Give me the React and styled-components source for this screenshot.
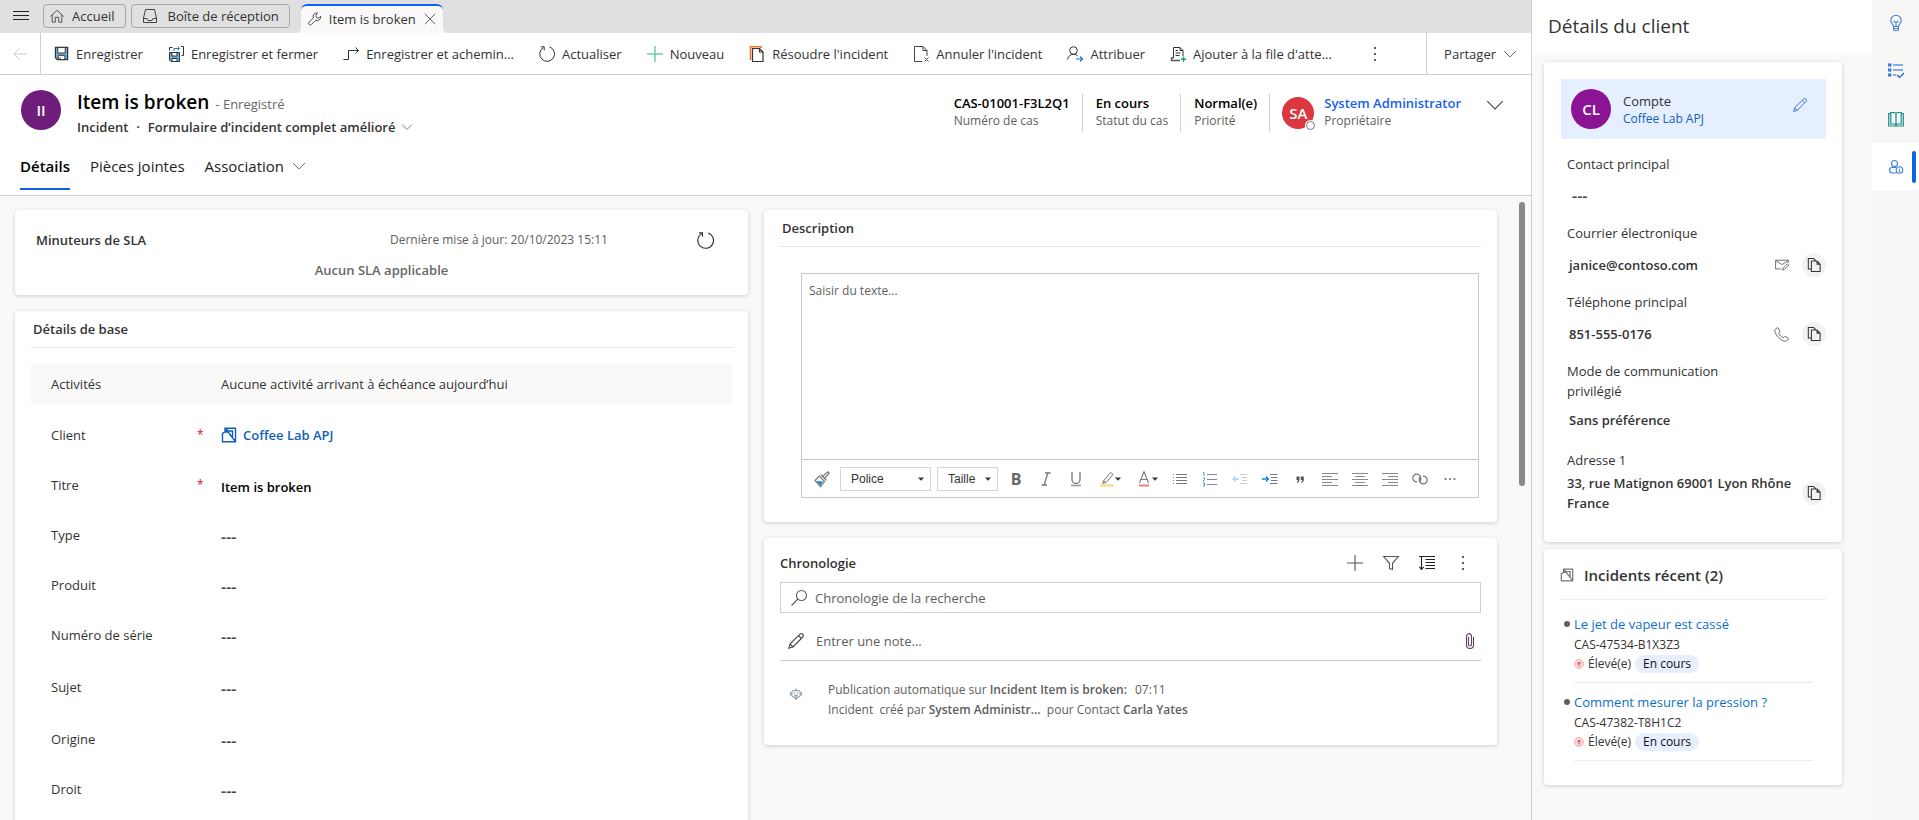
import React from "react";
import styled, { createGlobalStyle, css } from "styled-components";

const GlobalStyle = createGlobalStyle`
  *, *::before, *::after { box-sizing: border-box; }
  body { margin: 0; background: #faf9f8; }
  body, button, input, textarea, select {
    font-family: "Open Sans", "Noto Sans", sans-serif;
    font-size: 13px;
    line-height: 20px;
    color: #333;
  }
  button { background: none; border: 0; padding: 0; cursor: pointer; }
  a { text-decoration: none; }
  b { font-weight: 600; }
  h1, h2, p, ul, dl, dd { margin: 0; padding: 0; }
  ul { list-style: none; }
`;

/* ---------- Icons ---------- */

const Svg = styled.svg.attrs((p) => ({
  viewBox: p.viewBox || "0 0 16 16",
  fill: "none",
  stroke: p.stroke || "currentColor",
  "aria-hidden": true,
}))`
  width: ${(p) => p.$w || 16}px;
  height: ${(p) => p.$h || p.$w || 16}px;
  flex: none;
  display: block;
  overflow: visible;
`;

const MenuIcon = () => (
  <Svg stroke="#222" strokeWidth="1.200"><path d="M0 3.500h16M0 7.500h16M0 11.500h16" /></Svg>
);
const HomeIcon = () => (
  <Svg $w={14} stroke="#444"><path d="M.5 8.500 8 1.500l7.500 7M2.500 6.800v8.200h3.500v-5.500h4v5.500h3.500v-8.200" /></Svg>
);
const InboxIcon = () => (
  <Svg stroke="#444"><path d="M3.500 1.500h9l2 8.500v4.500h-13v-4.500zM1.500 10.500h3.500l1 2h4l1-2h3.500" /></Svg>
);
const WrenchIcon = () => (
  <Svg $w={14}><path d="M10.700 1.200a4 4 0 0 0-4.500 5.600L1.300 11.600a1.600 1.600 0 0 0 0 2.600 1.600 1.600 0 0 0 2.600 0l4.900-4.800a4 4 0 0 0 5.600-4.600l-2.300 2.300-2.400-.7-.7-2.400z" /></Svg>
);
const CloseIcon = () => (
  <Svg $w={12}><path d="M1 1 15 15M15 1 1 15" /></Svg>
);
const BackIcon = () => (
  <Svg stroke="#c8c6c4" $w={14}><path d="M16 8H1M7.500 1.500 1 8l6.500 6.500" /></Svg>
);
const SaveIcon = () => (
  <Svg $w={15}>
    <path d="M1.500 1.500h13v13h-11l-2-2z" fill="#69afe5" stroke="#333" strokeWidth="1.300" />
    <path d="M4 1.500h8v6H4z" fill="#fff" stroke="#333" />
    <path d="M4.500 10h7v4.500h-7z" fill="#fff" stroke="#333" />
    <path d="M6.500 12v2.500" stroke="#333" />
  </Svg>
);
const SaveCloseIcon = () => (
  <Svg>
    <path d="M1.500 6.500h10v9h-8.500l-1.500-1.500z" fill="#69afe5" stroke="#333" />
    <path d="M4 6.500h5v3.500H4zM4 12.500h5v3H4z" fill="#fff" stroke="#333" />
    <path d="M1.500 4.500v-3h3M13 .5h2.500v9h-2" stroke="#333" />
    <path d="M6 5V2.500h5M9.500.5l2 2-2 2" stroke="#1a75c4" />
  </Svg>
);
const RouteIcon = () => (
  <Svg stroke="#333"><path d="M.5 13.500h5V4.500h10M12.500 1.500l3 3-3 3" /></Svg>
);
const RefreshIcon = ({ w = 16 }) => (
  <Svg $w={w} stroke="#333"><path d="M10.500.9A7.400 7.400 0 1 1 4.500 1.500M1.800.8h3.400v3.600" /></Svg>
);
const PlusIcon = ({ color = "#6fcf9f", sw = 1.5, w = 16 }) => (
  <Svg $w={w} stroke={color} strokeWidth={sw}><path d="M8 0v16M0 8h16" /></Svg>
);
const ResolveIcon = () => (
  <Svg>
    <path d="M1.500 14V.7h10.500V2" stroke="#e8772e" strokeWidth="1.600" />
    <path d="M3.500 2.500h7l3.500 3.500v9.500H3.500zM10.500 2.500V6H14" fill="#fff" stroke="#333" strokeWidth="1.200" />
  </Svg>
);
const CancelIcon = () => (
  <Svg>
    <path d="M9 15.500H1.500V.5h8.500l4 4v5.500M10 .5v4h4" stroke="#444" />
    <path d="m11.500 11.500 4 4M15.500 11.500l-4 4" stroke="#555" />
  </Svg>
);
const AssignIcon = () => (
  <Svg>
    <circle cx="6.500" cy="4.500" r="3.800" stroke="#333" />
    <path d="M.6 13.500C1 10.300 3.300 8.400 6.500 8.400c1.700 0 3.200.6 4.300 1.700" stroke="#333" />
    <path d="M9 13h6.500M13 10.500l2.500 2.500-2.500 2.500" stroke="#1a75c4" strokeWidth="1.200" />
  </Svg>
);
const QueueIcon = () => (
  <Svg>
    <path d="M3.500 12V1.500h6.500l3 3V10M10 1.500v3h3M5.500 4.500h2.500M5.500 7h5M5.500 9.500h4" stroke="#333" />
    <path d="M3.500 12H1.500v2.500h8.500" stroke="#555" strokeWidth="1.400" />
    <path d="M13.500 10.500v5.500M10.800 13.200h5.400" stroke="#19a35b" strokeWidth="1.400" />
  </Svg>
);
const DotsVertical = () => (
  <Svg><g fill="currentColor" stroke="none"><circle cx="8" cy="2" r="1.100" /><circle cx="8" cy="8" r="1.100" /><circle cx="8" cy="14" r="1.100" /></g></Svg>
);
const Chevron = ({ w = 12, color = "#605e5c" }) => (
  <Svg $w={w} stroke={color} strokeWidth={w > 14 ? 1.1 : 1.3}><path d="M.3 4.200 8 11.900l7.700-7.700" /></Svg>
);
const AccountIcon = ({ color = "#1160b7", w = 16 }) => (
  <Svg $w={w} stroke={color} strokeWidth="1.400">
    <path d="M4 5 4 1.200h10.500V14.800H1.500V6.500L4 5h3l7.500 9.500M6.500 1.500 4.500 4.500M5 4h6.500v6" />
  </Svg>
);
const BrushIcon = () => (
  <Svg stroke="#777">
    <path d="M1 9.500 5.500 5l5 5.500-4 5z" fill="#fff" strokeWidth="1.200" />
    <path d="m2.500 10 6.500.5L6.500 14.500z" fill="#1a86d8" stroke="none" />
    <path d="m7 3.500 5.500 6M8.500 5.500 14 .8l1.200 1.300-4.700 5.400" fill="#fff" strokeWidth="1.200" />
  </Svg>
);
const PenMarkIcon = ({ color }) => (
  <Svg stroke="#777">
    <path d="M4.500 10 11.500 1.500l2.500 2-7 8-3.500 1zM4.500 10l2.500 1.500" />
    <path d="M1 14.500h14" stroke={color} strokeWidth="2" />
  </Svg>
);
const FontColorIcon = () => (
  <Svg stroke="#777">
    <path d="M3.500 12 8 .8 12.500 12M5 8.500h6" strokeWidth="1.100" />
    <path d="M3 14.500h10" stroke="#f0797a" strokeWidth="2" />
  </Svg>
);
const UnderlineIcon = () => (
  <Svg stroke="#777"><path d="M4 1v7.500a4 4 0 0 0 8 0V1" strokeWidth="1.300" /><path d="M3 14.500h10" strokeWidth="1.600" stroke="#999" /></Svg>
);
const ItalicIcon = () => (
  <Svg stroke="#777"><path d="M7 2h5.500M3.500 14h5.500M9.800 2 6.200 14" strokeWidth="1.300" /></Svg>
);
const BulletsIcon = () => (
  <Svg stroke="#777"><path d="M4 3.500h11M4 6.500h11M4 9.500h11M4 12.500h11" /><path d="M1 3.500h1M1 6.500h1M1 9.500h1M1 12.500h1" stroke="#3a96dd" /></Svg>
);
const NumbersIcon = () => (
  <Svg stroke="#8a8886"><path d="M5 3.500h10M5 8.500h10M5 13.500h10" /><path d="M1 2l1-.5V5M1 7h1.500v1.500L1 10h1.500M1 12h1.500v3H1" stroke="#3a96dd" /></Svg>
);
const OutdentIcon = () => (
  <Svg stroke="#ccc"><path d="M8 3.500h7M10 6.500h5M10 9.500h5M8 12.500h7" /><path d="M7 8H.8M3.500 5.500 1 8l2.500 2.500" stroke="#a9d3f2" strokeWidth="1.300" /></Svg>
);
const IndentIcon = () => (
  <Svg stroke="#777"><path d="M8 3.500h7.500M9 6.500h6.500M9 9.500h6.500M8 12.500h7.500" /><path d="M0 8h6.500M4 5.500 6.500 8 4 10.500" stroke="#1a86d8" strokeWidth="1.400" /></Svg>
);
const QuoteIcon = () => (
  <Svg><g fill="#555" stroke="none"><path d="M4.500 5.500h3v3c0 1.800-.8 3-2.500 3.500v-1c.8-.5 1-1.200 1-2H4.500z" /><path d="M8.800 5.500h3v3c0 1.800-.8 3-2.500 3.500v-1c.8-.5 1-1.200 1-2H8.800z" /></g></Svg>
);
const alignLines = {
  left: "M0 2.500h16M0 5.500h10M0 8.500h16M0 11.500h10M0 14.500h16",
  center: "M0 2.500h16M3 5.500h10M0 8.500h16M3 11.500h10M0 14.500h16",
  right: "M0 2.500h16M6 5.500h10M0 8.500h16M6 11.500h10M0 14.500h16",
};
const AlignIcon = ({ side }) => <Svg stroke="#8a8886"><path d={alignLines[side]} /></Svg>;
const LinkIcon = () => (
  <Svg stroke="#777" strokeWidth="1.200">
    <path d="M5 10.800A4 3.800 0 1 1 8.700 7.500c.3 1.500-.5 2.700-1.700 3.300" />
    <path d="M11 5.200A4 3.800 0 1 1 7.300 8.500C7 7 7.800 5.800 9 5.200" />
  </Svg>
);
const DotsHorizontal = () => (
  <Svg><g fill="#666" stroke="none"><circle cx="3.500" cy="8" r="1" /><circle cx="8" cy="8" r="1" /><circle cx="12.500" cy="8" r="1" /></g></Svg>
);
const CaretIcon = () => (
  <Svg $w={6} $h={4} viewBox="0 0 6 4"><path d="M0 .5h6L3 3.800z" fill="#333" stroke="none" /></Svg>
);
const FilterIcon = () => (
  <Svg stroke="#555"><path d="M.7 1.500h14.600L9.500 8.300v6.200l-3-1V8.300z" strokeWidth="1.100" /></Svg>
);
const SortIcon = () => (
  <Svg stroke="#222" strokeWidth="1.100"><path d="M0 1.500h16M6.500 4.500h9.500M6.500 7.500h9.500M6.500 10.500h9.500M6.500 13.500h9.500M2.500 2v12M.3 11.800l2.200 2.500 2.200-2.500" /></Svg>
);
const SearchIcon = () => (
  <Svg stroke="#605e5c" strokeWidth="1.100"><circle cx="10.500" cy="5.500" r="5" /><path d="M7 9 .5 15.500" /></Svg>
);
const PencilIcon = ({ w = 16, color = "#444" }) => (
  <Svg $w={w} stroke={color} strokeWidth="1.100">
    <path d="M.7 15.300 2 11 12 1.200a1.900 1.900 0 0 1 2.800 2.800L5 14zM2 11l3 3M10.500 2.700l2.800 2.800" />
  </Svg>
);
const ClipIcon = () => (
  <Svg stroke="#5c3d57" strokeWidth="1.100"><path d="M6.500 4v7.500a1.500 1.500 0 0 0 3 0V3.500a3 3 0 0 0-2-3 3 3 0 0 0-3 3V12a3.500 3.500 0 0 0 7 0V4" /></Svg>
);
const RobotIcon = () => (
  <Svg $w={12} stroke="#6b7f8c" strokeWidth="1.200">
    <rect x="2.500" y="3.500" width="11" height="8.500" rx="2" />
    <path d="M8 3.500V.5M.8 6v4M15.200 6v4M5.500 9c1.500 1.300 3.500 1.300 5 0M6 12l2 3.500 2-3.500" />
    <path d="M5.800 6v1.200M10.200 6v1.200" strokeWidth="1.600" />
  </Svg>
);
const MailPenIcon = () => (
  <Svg $w={14} stroke="#605e5c">
    <path d="M7 12.500H.7v-10h14.600v3M.7 3l7.300 4.500L15.300 3M8.500 14l.8-2.500 5-5 1.500 1.500-5 5z" />
  </Svg>
);
const PhoneIcon = () => (
  <Svg $w={15} stroke="#605e5c">
    <path d="M3.600.8 1.400 2.400C.3 3.600.5 6 3.700 9.900c3.700 4.300 7.500 5.900 9.500 5.100l2-2c.3-.5.200-.9-.2-1.200l-2.700-1.700c-.5-.3-1-.2-1.300.2l-1 1.100C7.500 10.500 5.800 8.400 5 6.500l.9-1.200c.3-.4.3-.8.1-1.200L4.700 1.100C4.500.7 4 .5 3.600.8z" />
  </Svg>
);
const CopyIcon = () => (
  <Svg $w={14} stroke="#333" strokeWidth="1.200">
    <path d="M5 12.500H1.500v-12h6l2.500 2.500M5 3.500h6.500l3.500 3.500v8.500H5zM11.500 3.500V7H15" />
  </Svg>
);
const BulbIcon = () => (
  <Svg stroke="#3b82e0" strokeWidth="1.100">
    <path d="M5.500 11.500C5.500 9.500 2.800 8.600 2.800 5.500a5.200 5.200 0 0 1 10.400 0c0 3.100-2.700 4-2.700 6zM5.500 11.500v3c0 .7.500 1 1 1h3c.5 0 1-.3 1-1v-3M5.500 13.500h5M8 11V7.500M5.500 6l2.500 1.800L10.500 6" />
  </Svg>
);
const TasksIcon = () => (
  <Svg stroke="#1462d8" strokeWidth="1.200">
    <path d="M5 2h10M5 7h10M5 12h3M9 12l2.500 2.500L16 10" />
    <path d="M.7 1h2v2h-2zM.7 6h2v2h-2zM.7 11h2v2h-2z" />
  </Svg>
);
const BookIcon = () => (
  <Svg stroke="#158b8b" strokeWidth="1.200">
    <path d="M2.800 1.500h3.400C7.300 1.500 8 2 8 3c0-1 .7-1.500 1.800-1.500h3.400v11.500H9.800C8.700 13 8 13.500 8 14.500c0-1-.7-1.500-1.800-1.500H2.800zM8 3v11.500M2.800 2.500H.7V15h14.600V2.500h-2.100" />
  </Svg>
);
const PersonInfoIcon = () => (
  <Svg stroke="#3b7fe0" strokeWidth="1.100">
    <circle cx="6.500" cy="4.500" r="3" />
    <path d="M8.500 14H4.500C2.500 14 1.500 12.800 1.500 11s1-2.500 2.500-2.500h4.500" />
    <circle cx="11.500" cy="11" r="3.300" />
    <path d="M11.500 10.500v2.500M11.500 8.800v.8" />
  </Svg>
);
const HighIcon = () => (
  <Svg $w={10} viewBox="0 0 10 10">
    <circle cx="5" cy="5" r="4.500" fill="#f9d5d6" stroke="#f3b5b8" />
    <path d="M5 7.300V3.200M3.500 4.600 5 3.100l1.500 1.500" stroke="#c4314b" strokeWidth=".9" />
  </Svg>
);

/* ---------- Page frame ---------- */

const Page = styled.div`
  display: flex;
  height: 100vh;
  overflow: hidden;
`;
const Main = styled.main`
  flex: 1;
  min-width: 0;
  display: flex;
  flex-direction: column;
  border-right: 1px solid #d2d0ce;
`;

/* ---------- Session tabs ---------- */

const SessionBar = styled.nav`
  display: flex;
  flex: none;
  align-items: flex-start;
  height: 33px;
  padding: 4px 12px 0 13px;
  background: #e0e0e0;
`;
const MenuButton = styled.button`
  padding-top: 4px;
  margin-right: 14px;
`;
const SessionButton = styled.button`
  display: flex;
  align-items: center;
  gap: ${(p) => p.$gap || 7}px;
  height: 24px;
  padding: 0 10px 0 ${(p) => p.$padLeft || 5}px;
  margin-right: 5px;
  border: 1px solid #a8a8a8;
  border-radius: 4px;
  white-space: nowrap;
`;
const ActiveSession = styled.div`
  position: relative;
  display: flex;
  align-items: center;
  gap: 8px;
  height: 29px;
  margin-left: 6px;
  padding: 0 7px 2px 7px;
  background: #faf9f8;
  border-top: 2px solid #0f62fe;
  border-radius: 6px 6px 0 0;
  white-space: nowrap;
  &::before, &::after {
    content: "";
    position: absolute;
    bottom: 0;
    width: 5px;
    height: 5px;
  }
  &::before { left: -5px; background: radial-gradient(circle at 0 0, transparent 5px, #faf9f8 5px); }
  &::after { right: -5px; background: radial-gradient(circle at 100% 0, transparent 5px, #faf9f8 5px); }
`;
const SessionTitle = styled.button`
  display: flex;
  align-items: center;
  gap: 7px;
`;

/* ---------- Command bar ---------- */

const CommandBar = styled.div`
  display: flex;
  flex: none;
  height: 42px;
  background: #fff;
  border-bottom: 1px solid #d2d0ce;
`;
const BackButton = styled.button`
  display: flex;
  align-items: center;
  padding: 0 13px;
  border-right: 1px solid #d2d0ce;
`;
const Commands = styled.div`
  flex: 1;
  display: flex;
  align-items: center;
  gap: 25px;
  padding-left: 13px;
`;
const Command = styled.button`
  display: flex;
  align-items: center;
  gap: 7px;
  white-space: nowrap;
`;
const MoreCommands = styled.button`
  margin-left: 10px;
`;
const ShareButton = styled.button`
  display: flex;
  align-items: center;
  gap: 8px;
  padding: 0 15px 0 17px;
  border-left: 1px solid #d2d0ce;
`;

/* ---------- Record header ---------- */

const RecordHeader = styled.header`
  flex: none;
  display: flex;
  flex-direction: column;
  justify-content: space-between;
  height: 121px;
  padding: 15px 28px 5px 21px;
  background: #fff;
  border-bottom: 1px solid #d2d0ce;
`;
const RecordTop = styled.div`
  display: flex;
  justify-content: space-between;
`;
const Identity = styled.div`
  display: flex;
  gap: 16px;
`;
const Avatar = styled.span`
  position: relative;
  flex: none;
  display: flex;
  align-items: center;
  justify-content: center;
  width: ${(p) => p.$size}px;
  height: ${(p) => p.$size}px;
  border-radius: 50%;
  background: ${(p) => p.$color};
  color: #fff;
  font-size: 15px;
  font-weight: 600;
`;
const Presence = styled.span`
  position: absolute;
  right: -1px;
  bottom: -1px;
  width: 9px;
  height: 9px;
  border-radius: 50%;
  border: 1px solid #777;
  background: #fff;
  box-shadow: 0 0 0 1px #fff;
`;
const TitleLine = styled.div`
  display: flex;
  align-items: baseline;
  gap: 6px;
  line-height: 24px;
  color: #666;
`;
const RecordTitle = styled.h1`
  font-size: 19px;
  line-height: 24px;
  font-weight: 600;
  color: #000;
`;
const FormPicker = styled.div`
  display: flex;
  align-items: center;
  gap: 8px;
  font-weight: 600;
  line-height: 22px;
`;
const PickerButton = styled.button`
  display: flex;
  align-items: center;
  gap: 7px;
  font-weight: 600;
`;
const Facts = styled.dl`
  display: flex;
  padding-top: 4px;
`;
const Fact = styled.div`
  display: flex;
  flex-direction: column-reverse;
  justify-content: flex-end;
  height: 38px;
  padding: 0 12px 0 13px;
  border-right: 1px solid #d2d0ce;
  white-space: nowrap;
`;
const FactLabel = styled.dt`
  font-size: 12px;
  line-height: 18px;
  color: #605e5c;
`;
const FactValue = styled.dd`
  font-weight: 600;
  line-height: 18px;
  color: #000;
`;
const Owner = styled.div`
  display: flex;
  gap: 10px;
  padding-left: 12px;
`;
const OwnerText = styled.div`
  display: flex;
  flex-direction: column-reverse;
  justify-content: flex-end;
`;
const OwnerLink = styled.a`
  color: #1a5ff0;
`;
const ExpandButton = styled.button`
  align-self: flex-start;
  padding-top: 3px;
  margin-left: 26px;
`;
const OwnerAvatar = styled(Avatar)`
  margin-top: 3px;
`;
const FormTabs = styled.div`
  display: flex;
  gap: 20px;
  margin-left: -1px;
`;
const FormTab = styled.button`
  display: flex;
  align-items: flex-start;
  gap: 9px;
  height: 36px;
  font-size: 15px;
  line-height: 24px;
  color: #222;
  border-bottom: 2px solid transparent;
  ${(p) => p.$active && css`
    font-weight: 600;
    color: #000;
    border-color: #0f62d8;
  `}
  svg { margin-top: 6px; }
`;

/* ---------- Form body ---------- */

const FormBody = styled.div`
  flex: 1;
  min-height: 0;
  display: flex;
`;
const Columns = styled.div`
  flex: 1;
  min-width: 0;
  display: grid;
  grid-template-columns: 1fr 1fr;
  gap: 16px;
  padding: 14px 22px 16px 15px;
  overflow-y: auto;
  scrollbar-width: none;
`;
const Column = styled.div`
  display: flex;
  flex-direction: column;
  gap: 16px;
  min-width: 0;
`;
const ScrollTrack = styled.div`
  width: 12px;
  padding: 6px 6px 0 0;
`;
const ScrollThumb = styled.div`
  width: 6px;
  height: 46%;
  border-radius: 3px;
  background: #8a8886;
`;
const Card = styled.section`
  background: #fff;
  border-radius: 4px;
  box-shadow: 0 1px 4px rgba(0, 0, 0, 0.18);
  padding: ${(p) => p.$pad || "0 16px"};
`;
const CardTitle = styled.h2`
  font-size: 13px;
  line-height: 20px;
  font-weight: 600;
  padding: 8px 2px;
  border-bottom: 1px solid #e6e6e6;
`;
const PlainTitle = styled.h2`
  font-size: 13px;
  line-height: 20px;
  font-weight: 600;
`;
const SlaTop = styled.div`
  display: grid;
  grid-template-columns: 354px 1fr auto;
  align-items: center;
  padding-right: 13px;
`;
const Updated = styled.span`
  font-size: 12px;
  color: #605e5c;
`;
const SlaEmpty = styled.p`
  padding-top: 10px;
  text-align: center;
  font-weight: 600;
  color: #666;
`;
const ActivityBand = styled.div`
  display: grid;
  grid-template-columns: 170px 1fr;
  margin: 16px 0;
  padding: 10px 20px;
  background: #faf9f8;
`;
const FieldRow = styled.div`
  display: grid;
  grid-template-columns: 146px 24px 1fr;
  align-items: start;
  height: ${(p) => (p.$tall ? 52 : 50)}px;
  padding: 5px 20px;
`;
const Required = styled.span`
  color: #e00b1c;
  font-size: 12px;
  line-height: 20px;
`;
const FieldInput = styled.input`
  width: 100%;
  height: 24px;
  padding: 0;
  border: 0;
  background: none;
  font-weight: 600;
  color: ${(p) => (p.$empty ? "#444" : "#000")};
  font-size: ${(p) => (p.$empty ? 16 : 13)}px;
`;
const LookupLink = styled.a`
  display: flex;
  align-items: center;
  gap: 6px;
  font-weight: 600;
  color: #1160b7;
`;

/* ---------- Rich text editor ---------- */

const Editor = styled.div`
  margin: 26px 2px 24px 21px;
  border: 1px solid #c8c8c8;
`;
const EditorText = styled.textarea`
  display: block;
  width: 100%;
  height: 186px;
  padding: 7px;
  border: 0;
  border-bottom: 1px solid #c8c8c8;
  resize: none;
  outline: 0;
  font-size: 12px;
  background: #fff;
  &::placeholder { color: #605e5c; opacity: 1; }
`;
const EditorTools = styled.div`
  display: flex;
  align-items: center;
  height: 37px;
  padding-left: 5px;
`;
const Tool = styled.button`
  flex: none;
  display: flex;
  align-items: center;
  justify-content: center;
  width: ${(p) => (p.$menu ? 37 : 30)}px;
  height: 24px;
  color: #666;
`;
const BoldGlyph = styled.b`
  font-size: 16px;
  font-weight: 700;
`;
const SelectBox = styled.div`
  flex: none;
  position: relative;
  width: ${(p) => p.$width}px;
  margin: 0 3px;
  svg { position: absolute; right: 7px; top: 10px; pointer-events: none; }
`;
const Select = styled.select`
  appearance: none;
  display: block;
  width: 100%;
  height: 24px;
  padding: 0 0 0 ${(p) => p.$pad}px;
  border: 1px solid #d6d6d6;
  border-radius: 0;
  background: #fff;
  font-family: "Liberation Sans", sans-serif;
  font-size: 12px;
  line-height: 16px;
`;

/* ---------- Timeline ---------- */

const TimelineHead = styled.div`
  display: flex;
  justify-content: space-between;
  align-items: center;
  padding: 15px 10px 9px 0;
`;
const TimelineTools = styled.div`
  display: flex;
  gap: 20px;
  color: #333;
`;
const SearchBox = styled.label`
  display: flex;
  align-items: center;
  gap: 8px;
  height: 31px;
  padding: 0 10px;
  border: 1px solid #d0d0d0;
`;
const BareInput = styled.input`
  flex: 1;
  border: 0;
  padding: 0;
  background: none;
  outline: 0;
  &::placeholder { color: #605e5c; opacity: 1; }
`;
const NoteBox = styled.div`
  display: flex;
  align-items: center;
  gap: 12px;
  height: 48px;
  padding: 9px 3px 0 8px;
  border-bottom: 1px solid #c8c8c8;
`;
const Post = styled.article`
  display: flex;
  align-items: flex-start;
  gap: 26px;
  padding: 19px 10px 25px;
  font-size: 12px;
  color: #605e5c;
  svg { margin-top: 8px; }
`;
const PostTime = styled.span`
  margin-left: 8px;
`;

/* ---------- Customer panel ---------- */

const Panel = styled.aside`
  flex: none;
  width: 340px;
  background: #faf9f8;
`;
const PanelTitle = styled.h2`
  height: 55px;
  padding: 14px 16px;
  background: #fff;
  font-size: 19px;
  line-height: 24px;
  font-weight: 400;
`;
const PanelBody = styled.div`
  display: flex;
  flex-direction: column;
  gap: 7px;
  padding: 7px 30px 0 12px;
`;
const Banner = styled.div`
  display: flex;
  gap: 12px;
  height: 60px;
  margin-bottom: 15px;
  padding: 10px 19px 10px 10px;
  background: #e6efff;
`;
const BannerText = styled.div`
  flex: 1;
  padding-top: 3px;
  line-height: 18px;
`;
const BannerLink = styled.a`
  display: block;
  font-size: 12px;
  line-height: 18px;
  color: #1160b7;
`;
const PencilButton = styled.button`
  align-self: flex-start;
  padding-top: 9px;
`;
const PanelField = styled.div`
  padding: 0 0 0 6px;
  margin-bottom: ${(p) => p.$below || 11}px;
`;
const PanelLabel = styled.div`
  max-width: 180px;
`;
const PanelValue = styled.div`
  display: flex;
  align-items: center;
  gap: ${(p) => (p.$flush ? 2 : 13)}px;
  min-height: ${(p) => (p.$flush ? 40 : 32)}px;
  margin-top: ${(p) => (p.$flush ? 3 : p.$close ? 3 : 6)}px;
  padding-left: ${(p) => (p.$flush ? 0 : 2)}px;
  font-weight: 600;
`;
const ValueText = styled.span`
  flex: 1;
`;
const EmptyValue = styled.span`
  padding-left: 3px;
  font-size: 16px;
  color: #444;
`;
const RoundButton = styled.button`
  flex: none;
  display: flex;
  align-items: center;
  justify-content: center;
  width: 24px;
  height: 24px;
  border-radius: 50%;
  background: #f3f2f1;
`;
const RecentTitle = styled.h2`
  display: flex;
  align-items: center;
  gap: 10px;
  padding-bottom: 12px;
  font-size: 15px;
  line-height: 24px;
  font-weight: 600;
  border-bottom: 1px solid #edebe9;
`;
const RecentList = styled.ul`
  padding: 14px 13px 0 4px;
`;
const RecentItem = styled.li`
  display: grid;
  grid-template-columns: 10px 1fr;
  &::before {
    content: "";
    width: 6px;
    height: 6px;
    margin-top: 7px;
    border-radius: 50%;
    background: #605e5c;
  }
`;
const RecentBody = styled.div`
  padding-bottom: 9px;
  margin-bottom: 9px;
  border-bottom: 1px solid #edebe9;
`;
const RecentLink = styled.a`
  display: block;
  color: #0f6fca;
`;
const CaseNumber = styled.div`
  font-size: 12px;
  line-height: 21px;
`;
const CaseState = styled.div`
  display: flex;
  align-items: center;
  gap: 4px;
  font-size: 12px;
  line-height: 18px;
`;
const Pill = styled.span`
  padding: 0 8px;
  border-radius: 9px;
  background: #e6efff;
  color: #111;
`;

/* ---------- Right rail ---------- */

const Rail = styled.nav`
  flex: none;
  width: 47px;
  margin-top: -1px;
  background: #f8f7f6;
`;
const RailButton = styled.button`
  position: relative;
  display: flex;
  align-items: center;
  width: 100%;
  height: 48px;
  padding-left: 16px;
  background: ${(p) => (p.$active ? "#fff" : "none")};
  ${(p) => p.$active && css`
    &::after {
      content: "";
      position: absolute;
      right: 3px;
      top: 8px;
      width: 4px;
      height: 32px;
      border-radius: 2px;
      background: #0f62e0;
    }
  `}
`;

/* ---------- Content ---------- */

const commands = [
  [SaveIcon, "Enregistrer"],
  [SaveCloseIcon, "Enregistrer et fermer"],
  [RouteIcon, "Enregistrer et achemin..."],
  [RefreshIcon, "Actualiser"],
  [PlusIcon, "Nouveau"],
  [ResolveIcon, "Résoudre l'incident"],
  [CancelIcon, "Annuler l'incident"],
  [AssignIcon, "Attribuer"],
  [QueueIcon, "Ajouter à la file d'atte..."],
];

const emptyFields = [
  { id: "type", label: "Type" },
  { id: "produit", label: "Produit" },
  { id: "serie", label: "Numéro de série", tall: true },
  { id: "sujet", label: "Sujet", tall: true },
  { id: "origine", label: "Origine" },
  { id: "droit", label: "Droit" },
];

const facts = [
  ["CAS-01001-F3L2Q1", "Numéro de cas"],
  ["En cours", "Statut du cas"],
  ["Normal(e)", "Priorité"],
];

const recent = [
  ["Le jet de vapeur est cassé", "CAS-47534-B1X3Z3"],
  ["Comment mesurer la pression ?", "CAS-47382-T8H1C2"],
];

const tools = [
  ["Puces", BulletsIcon],
  ["Numérotation", NumbersIcon],
  ["Diminuer le retrait", OutdentIcon],
  ["Augmenter le retrait", IndentIcon],
  ["Citation", QuoteIcon],
  ["Aligner à gauche", () => <AlignIcon side="left" />],
  ["Centrer", () => <AlignIcon side="center" />],
  ["Aligner à droite", () => <AlignIcon side="right" />],
  ["Lien", LinkIcon],
  ["Plus", DotsHorizontal],
];

function CopyButton() {
  return <RoundButton aria-label="Copier"><CopyIcon /></RoundButton>;
}

export default function App() {
  return (
    <Page>
      <GlobalStyle />
      <Main>
        <SessionBar>
          <MenuButton aria-label="Menu"><MenuIcon /></MenuButton>
          <SessionButton $gap={8} $padLeft={6}><HomeIcon />Accueil</SessionButton>
          <SessionButton $gap={10} $padLeft={10}><InboxIcon />Boîte de réception</SessionButton>
          <ActiveSession>
            <SessionTitle><WrenchIcon />Item is broken</SessionTitle>
            <button aria-label="Fermer"><CloseIcon /></button>
          </ActiveSession>
        </SessionBar>

        <CommandBar>
          <BackButton aria-label="Retour"><BackIcon /></BackButton>
          <Commands>
            {commands.map(([Icon, text]) => (
              <Command key={text}><Icon />{text}</Command>
            ))}
            <MoreCommands aria-label="Plus de commandes"><DotsVertical /></MoreCommands>
          </Commands>
          <ShareButton>Partager<Chevron /></ShareButton>
        </CommandBar>

        <RecordHeader>
          <RecordTop>
            <Identity>
              <Avatar $size={40} $color="#6f1d7a">II</Avatar>
              <div>
                <TitleLine>
                  <RecordTitle>Item is broken</RecordTitle>
                  <span>- Enregistré</span>
                </TitleLine>
                <FormPicker>
                  <span>Incident</span>
                  <span>·</span>
                  <PickerButton>Formulaire d’incident complet amélioré<Chevron w={10} /></PickerButton>
                </FormPicker>
              </div>
            </Identity>
            <Facts>
              {facts.map(([value, label]) => (
                <Fact key={label}>
                  <FactLabel>{label}</FactLabel>
                  <FactValue>{value}</FactValue>
                </Fact>
              ))}
              <Owner>
                <OwnerAvatar $size={32} $color="#dc3640">SA<Presence /></OwnerAvatar>
                <OwnerText>
                  <FactLabel>Propriétaire</FactLabel>
                  <FactValue><OwnerLink href="#owner">System Administrator</OwnerLink></FactValue>
                </OwnerText>
              </Owner>
              <ExpandButton aria-label="Développer l'en-tête"><Chevron w={16} color="#444" /></ExpandButton>
            </Facts>
          </RecordTop>
          <FormTabs>
            <FormTab $active>Détails</FormTab>
            <FormTab>Pièces jointes</FormTab>
            <FormTab>Association<Chevron /></FormTab>
          </FormTabs>
        </RecordHeader>

        <FormBody>
          <Columns>
            <Column>
              <Card $pad="20px 21px 15px">
                <SlaTop>
                  <PlainTitle>Minuteurs de SLA</PlainTitle>
                  <Updated>Dernière mise à jour: 20/10/2023 15:11</Updated>
                  <button aria-label="Actualiser les minuteurs"><RefreshIcon w={17} /></button>
                </SlaTop>
                <SlaEmpty>Aucun SLA applicable</SlaEmpty>
              </Card>
              <Card>
                <CardTitle>Détails de base</CardTitle>
                <ActivityBand>
                  <span>Activités</span>
                  <span>Aucune activité arrivant à échéance aujourd’hui</span>
                </ActivityBand>
                <FieldRow>
                  <span>Client</span>
                  <Required>*</Required>
                  <LookupLink href="#client"><AccountIcon />Coffee Lab APJ</LookupLink>
                </FieldRow>
                <FieldRow>
                  <label htmlFor="titre">Titre</label>
                  <Required>*</Required>
                  <FieldInput id="titre" defaultValue="Item is broken" />
                </FieldRow>
                {emptyFields.map((f) => (
                  <FieldRow key={f.id} $tall={f.tall}>
                    <label htmlFor={f.id}>{f.label}</label>
                    <span />
                    <FieldInput id={f.id} $empty defaultValue="---" />
                  </FieldRow>
                ))}
              </Card>
            </Column>

            <Column>
              <Card>
                <CardTitle>Description</CardTitle>
                <Editor>
                  <EditorText aria-label="Description" placeholder="Saisir du texte..." />
                  <EditorTools>
                    <Tool aria-label="Reproduire la mise en forme"><BrushIcon /></Tool>
                    <SelectBox $width={91}>
                      <Select $pad={10} aria-label="Police"><option>Police</option></Select>
                      <CaretIcon />
                    </SelectBox>
                    <SelectBox $width={61}>
                      <Select $pad={10} aria-label="Taille"><option>Taille</option></Select>
                      <CaretIcon />
                    </SelectBox>
                    <Tool aria-label="Gras"><BoldGlyph>B</BoldGlyph></Tool>
                    <Tool aria-label="Italique"><ItalicIcon /></Tool>
                    <Tool aria-label="Souligné"><UnderlineIcon /></Tool>
                    <Tool $menu aria-label="Surlignage"><PenMarkIcon color="#fcd587" /><CaretIcon /></Tool>
                    <Tool $menu aria-label="Couleur du texte"><FontColorIcon /><CaretIcon /></Tool>
                    {tools.map(([name, Icon]) => (
                      <Tool key={name} aria-label={name}><Icon /></Tool>
                    ))}
                  </EditorTools>
                </Editor>
              </Card>

              <Card>
                <TimelineHead>
                  <PlainTitle>Chronologie</PlainTitle>
                  <TimelineTools>
                    <button aria-label="Ajouter"><PlusIcon color="#555" sw={1.1} /></button>
                    <button aria-label="Filtrer"><FilterIcon /></button>
                    <button aria-label="Trier"><SortIcon /></button>
                    <button aria-label="Plus"><DotsVertical /></button>
                  </TimelineTools>
                </TimelineHead>
                <SearchBox>
                  <SearchIcon />
                  <BareInput aria-label="Chronologie de la recherche" placeholder="Chronologie de la recherche" />
                </SearchBox>
                <NoteBox>
                  <PencilIcon />
                  <BareInput aria-label="Entrer une note" placeholder="Entrer une note..." />
                  <button aria-label="Joindre"><ClipIcon /></button>
                </NoteBox>
                <Post>
                  <RobotIcon />
                  <div>
                    <p>Publication automatique sur <b>Incident Item is broken:</b><PostTime>07:11</PostTime></p>
                    <p>Incident&nbsp; créé par <b>System Administr...</b>&nbsp; pour Contact <b>Carla Yates</b></p>
                  </div>
                </Post>
              </Card>
            </Column>
          </Columns>
          <ScrollTrack><ScrollThumb /></ScrollTrack>
        </FormBody>
      </Main>

      <Panel>
        <PanelTitle>Détails du client</PanelTitle>
        <PanelBody>
          <Card $pad="17px 16px 28px 17px">
            <Banner>
              <Avatar $size={40} $color="#8b1494">CL</Avatar>
              <BannerText>
                Compte
                <BannerLink href="#account">Coffee Lab APJ</BannerLink>
              </BannerText>
              <PencilButton aria-label="Modifier"><PencilIcon w={14} color="#3b6fe0" /></PencilButton>
            </Banner>
            <PanelField>
              <PanelLabel>Contact principal</PanelLabel>
              <PanelValue><EmptyValue>---</EmptyValue></PanelValue>
            </PanelField>
            <PanelField>
              <PanelLabel>Courrier électronique</PanelLabel>
              <PanelValue>
                <ValueText>janice@contoso.com</ValueText>
                <button aria-label="Envoyer un courrier"><MailPenIcon /></button>
                <CopyButton />
              </PanelValue>
            </PanelField>
            <PanelField>
              <PanelLabel>Téléphone principal</PanelLabel>
              <PanelValue>
                <ValueText>851-555-0176</ValueText>
                <button aria-label="Appeler"><PhoneIcon /></button>
                <CopyButton />
              </PanelValue>
            </PanelField>
            <PanelField $below={14}>
              <PanelLabel>Mode de communication privilégié</PanelLabel>
              <PanelValue $close><ValueText>Sans préférence</ValueText></PanelValue>
            </PanelField>
            <PanelField $below={1}>
              <PanelLabel>Adresse 1</PanelLabel>
              <PanelValue $flush>
                <ValueText>33, rue Matignon 69001 Lyon Rhône France</ValueText>
                <CopyButton />
              </PanelValue>
            </PanelField>
          </Card>

          <Card $pad="14px 16px 15px">
            <RecentTitle><AccountIcon color="#777" w={14} />Incidents récent (2)</RecentTitle>
            <RecentList>
              {recent.map(([title, number]) => (
                <RecentItem key={number}>
                  <RecentBody>
                    <RecentLink href={"#" + number}>{title}</RecentLink>
                    <CaseNumber>{number}</CaseNumber>
                    <CaseState><HighIcon />Élevé(e)<Pill>En cours</Pill></CaseState>
                  </RecentBody>
                </RecentItem>
              ))}
            </RecentList>
          </Card>
        </PanelBody>
      </Panel>

      <Rail>
        <RailButton aria-label="Assistant"><BulbIcon /></RailButton>
        <RailButton aria-label="Tâches"><TasksIcon /></RailButton>
        <RailButton aria-label="Base de connaissances"><BookIcon /></RailButton>
        <RailButton $active aria-label="Détails du client"><PersonInfoIcon /></RailButton>
      </Rail>
    </Page>
  );
}
